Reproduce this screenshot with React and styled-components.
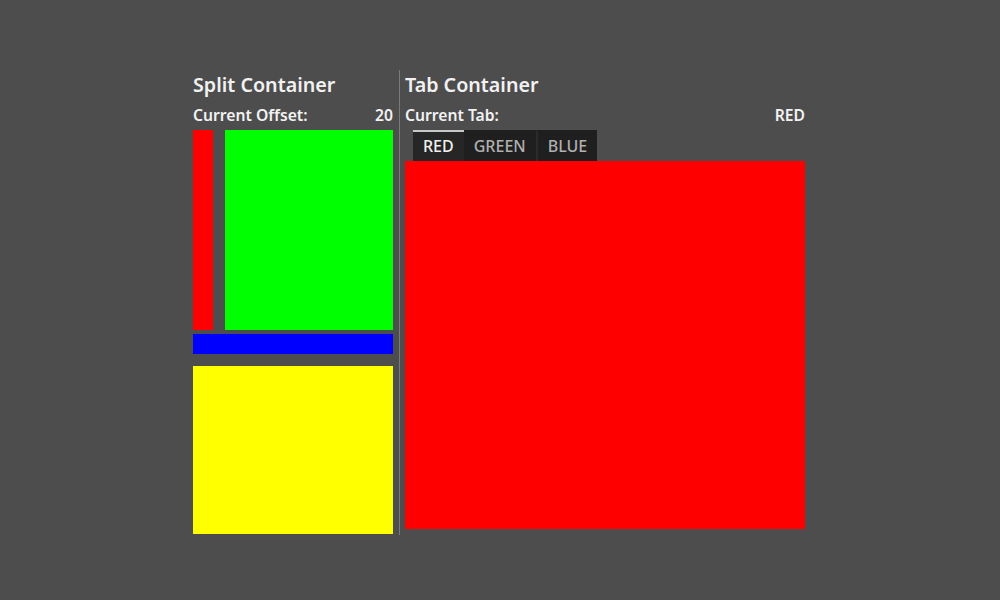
import React, { useState } from 'react';
import styled, { createGlobalStyle } from 'styled-components';

const GlobalStyle = createGlobalStyle`
	html, body {
		margin: 0;
		padding: 0;
		background: #4d4d4d;
		font-family: 'Noto Sans', 'Open Sans', sans-serif;
		color: #f0f0f0;
	}
`;

const Page = styled.div`
	width: 1000px;
	height: 600px;
	box-sizing: border-box;
	padding: 70px 0 0 193px;
	display: flex;
	align-items: flex-start;
`;

const Column = styled.div`
	width: ${(p) => p.$width}px;
	height: ${(p) => p.$height}px;
	display: flex;
	flex-direction: column;
`;

const Divider = styled.div`
	width: 1px;
	height: 465px;
	margin: 0 5px 0 6px;
	background: #7a7a7a;
`;

const Title = styled.div`
	height: 30px;
	line-height: 30px;
	font-size: 19.7px;
	font-weight: 600;
	color: #f2f2f2;
	white-space: nowrap;
`;

const InfoRow = styled.div`
	height: 30px;
	line-height: 30px;
	font-size: 15.7px;
	font-weight: 600;
	color: #f2f2f2;
	display: flex;
	justify-content: space-between;
	white-space: nowrap;
`;

const SplitTop = styled.div`
	display: flex;
	height: 200px;
	gap: 12px;
`;

const Swatch = styled.div`
	background: ${(p) => p.$color};
	height: ${(p) => (p.$height ? `${p.$height}px` : 'auto')};
	flex: ${(p) => (p.$grow ? 1 : 'none')};
	margin-top: ${(p) => p.$top || 0}px;
`;

const TabBar = styled.div`
	display: flex;
	height: 31px;
	padding-left: 8px;
`;

const Tab = styled.div`
	box-sizing: border-box;
	height: 31px;
	padding: 0 10px;
	line-height: 29px;
	font-size: 16px;
	font-weight: 500;
	cursor: pointer;
	background: ${(p) => (p.$active ? '#262626' : '#1f1f1f')};
	color: ${(p) => (p.$active ? '#f0f0f0' : '#b0b0b0')};
	border-top: 2px solid ${(p) => (p.$active ? '#c8c8c8' : '#1f1f1f')};
	border-left: ${(p) => (p.$sep ? '2px solid #2b2b2b' : 'none')};
`;

const TabPanel = styled.div`
	height: 368px;
	background: ${(p) => p.$color};
`;

const TABS = [
	{ name: 'RED', color: '#ff0000' },
	{ name: 'GREEN', color: '#00ff00' },
	{ name: 'BLUE', color: '#0000ff' },
];

export default function App() {
	const [tab, setTab] = useState(0);
	const offset = 20;

	return (
		<>
			<GlobalStyle />
			<Page>
				<Column $width={200} $height={464}>
					<Title>Split Container</Title>
					<InfoRow>
						<span>Current Offset:</span>
						<span>{offset}</span>
					</InfoRow>
					<SplitTop>
						<Swatch $color='#ff0000' style={{ width: offset }} />
						<Swatch $color='#00ff00' $grow />
					</SplitTop>
					<Swatch $color='#0000ff' $height={20} $top={4} />
					<Swatch $color='#ffff00' $height={168} $top={12} />
				</Column>
				<Divider />
				<Column $width={400} $height={459}>
					<Title>Tab Container</Title>
					<InfoRow>
						<span>Current Tab:</span>
						<span>{TABS[tab].name}</span>
					</InfoRow>
					<TabBar>
						{TABS.map((t, i) => (
							<Tab
								key={t.name}
								$active={i === tab}
								$sep={i === 2}
								onClick={() => setTab(i)}>
								{t.name}
							</Tab>
						))}
					</TabBar>
					<TabPanel $color={TABS[tab].color} />
				</Column>
			</Page>
		</>
	);
}
